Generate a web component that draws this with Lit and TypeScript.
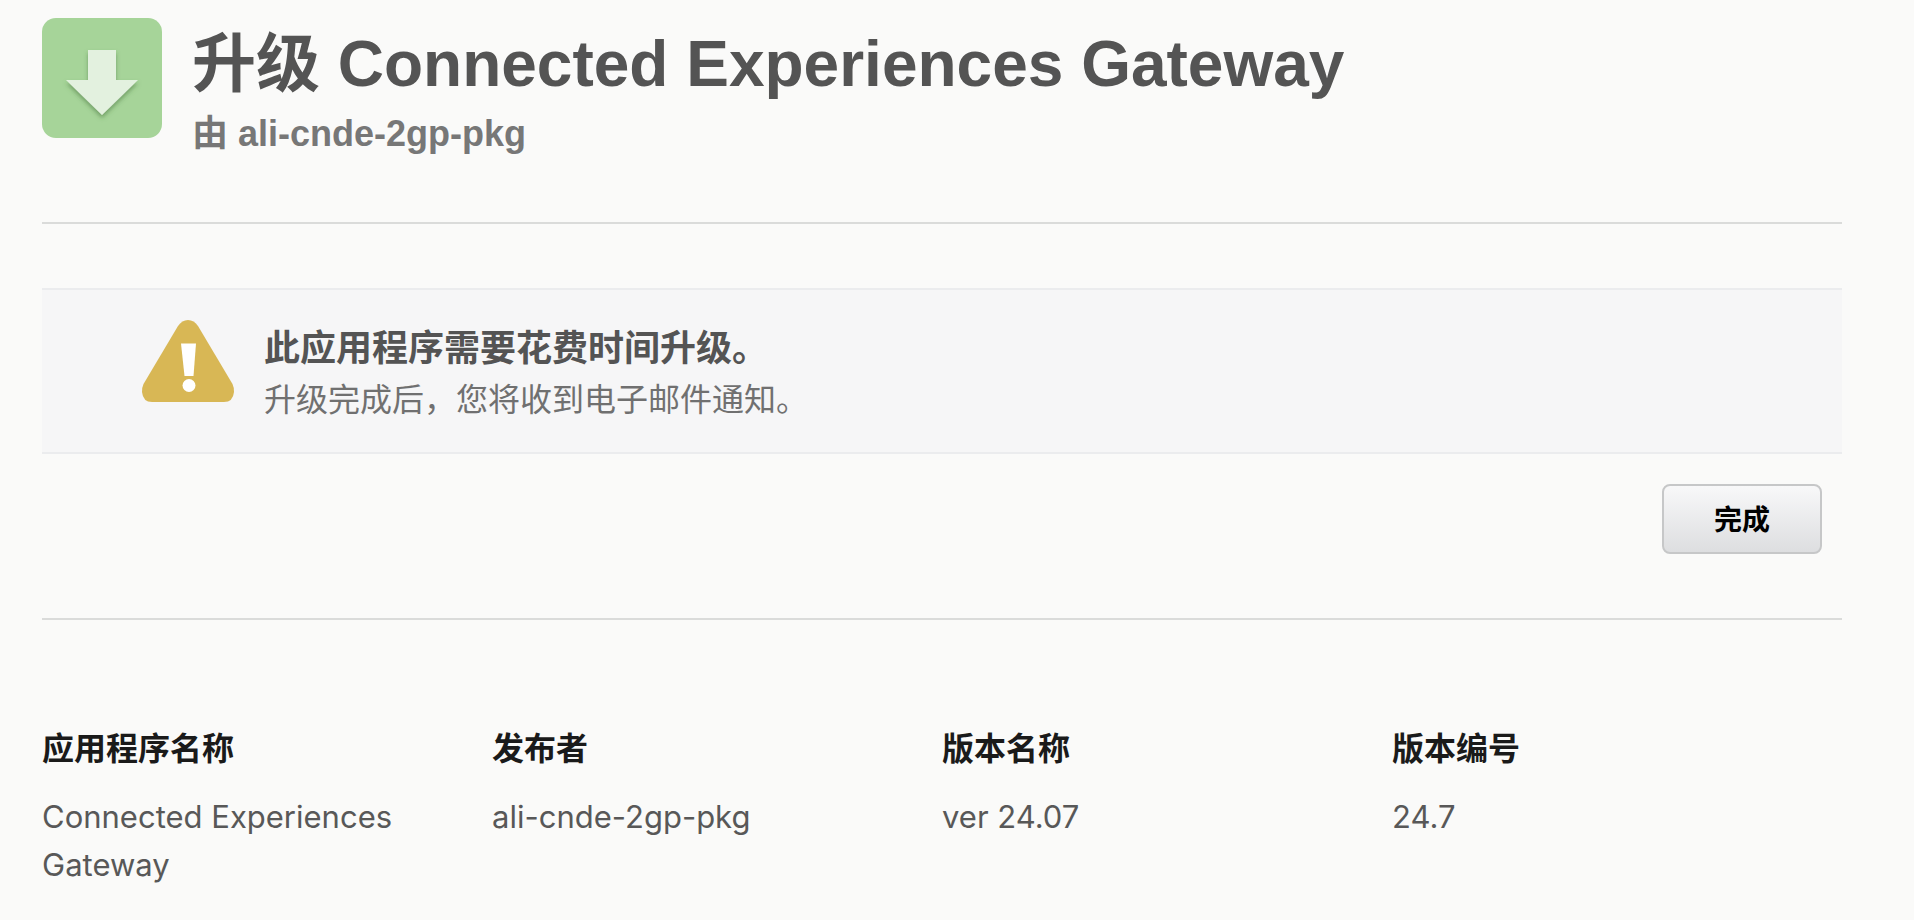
import { LitElement, html, css } from "lit";
import { customElement, state } from "lit/decorators.js";

interface Detail {
  label: string;
  value: string;
}

@customElement("app-root")
export class AppRoot extends LitElement {
  static styles = css`
    :host {
      display: block;
      box-sizing: border-box;
      min-height: 100vh;
      padding: 18px 72px 18px 42px;
      background: #fafaf9;
      color: #545454;
      font-family: "Liberation Sans", "Noto Sans CJK SC", sans-serif;
    }
    h1, h2, p, dl, dt, dd { margin: 0; }
    .header {
      display: flex;
      align-items: flex-start;
      gap: 30px;
      padding-bottom: 56px;
      border-bottom: 2px solid #dadbda;
    }
    .app-icon { flex: none; width: 120px; height: 120px; }
    .title {
      padding-top: 8px;
      font-size: 64px;
      line-height: 76px;
      font-weight: 700;
    }
    .publisher {
      font-size: 36px;
      line-height: 64px;
      font-weight: 700;
      color: #777777;
    }
    .notice {
      display: flex;
      align-items: flex-start;
      gap: 30px;
      margin-top: 64px;
      padding: 30px 100px 28px;
      border: solid #ebecee;
      border-width: 2px 0;
      background: #f6f6f7;
    }
    .warning { flex: none; width: 92px; height: 82px; }
    .notice-body { padding-top: 2px; }
    .notice-title {
      font-size: 36px;
      line-height: 54px;
      font-weight: 700;
    }
    .notice-text {
      font-size: 32px;
      line-height: 48px;
      color: #707070;
    }
    .actions {
      display: flex;
      justify-content: flex-end;
      padding: 30px 20px 64px;
      border-bottom: 2px solid #dadbda;
    }
    .done {
      box-sizing: border-box;
      height: 70px;
      padding: 0 50px 3px;
      border: 2px solid #c6c7c8;
      border-radius: 8px;
      background: linear-gradient(#f8f8f9, #dddee0);
      color: #000000;
      font: inherit;
      font-size: 28px;
      font-weight: 700;
      cursor: pointer;
    }
    .details {
      display: grid;
      grid-template-columns: repeat(4, 1fr);
      padding-top: 105px;
      font-family: Inter, "Noto Sans CJK SC", sans-serif;
      line-height: 48px;
    }
    .detail { padding-right: 50px; }
    .label { color: #1a1a1a; font-size: 32px; font-weight: 700; }
    .value { padding-top: 20px; color: #585858; font-size: 31px; }
  `;

  @state()
  private details: Detail[] = [
    { label: "应用程序名称", value: "Connected Experiences Gateway" },
    { label: "发布者", value: "ali-cnde-2gp-pkg" },
    { label: "版本名称", value: "ver 24.07" },
    { label: "版本编号", value: "24.7" },
  ];

  render() {
    return html`
      <header class="header">
        <svg class="app-icon" viewBox="0 0 120 120" aria-hidden="true">
          <defs>
            <filter id="shadow" x="-20%" y="-20%" width="140%" height="150%">
              <feDropShadow dx="0" dy="3" stdDeviation="2" flood-color="#3c6b30" flood-opacity="0.5" />
            </filter>
          </defs>
          <rect width="120" height="120" rx="14" fill="#a6d499" />
          <path d="M46 32H74V62H96L60 97L24 62H46Z" fill="#e3f1df" filter="url(#shadow)" />
        </svg>
        <div>
          <h1 class="title">升级 Connected Experiences Gateway</h1>
          <p class="publisher">由 ali-cnde-2gp-pkg</p>
        </div>
      </header>
      <section class="notice" role="status">
        <svg class="warning" viewBox="0 0 92 82" aria-hidden="true">
          <path
            d="M36 6Q40 0 46 0Q52 0 56 6L90.500 64Q92 67 92 72Q91 82 82 82H10Q1 82 0 72Q0 67 1.500 64Z"
            fill="#d8b755"
          />
          <path d="M39 23.500H54L51.500 56H42.500Z" fill="#ffffff" />
          <circle cx="47" cy="65.500" r="6.500" fill="#ffffff" />
        </svg>
        <div class="notice-body">
          <h2 class="notice-title">此应用程序需要花费时间升级。</h2>
          <p class="notice-text">升级完成后，您将收到电子邮件通知。</p>
        </div>
      </section>
      <div class="actions">
        <button class="done" type="button">完成</button>
      </div>
      <dl class="details">
        ${this.details.map(
          (item) => html`
            <div class="detail">
              <dt class="label">${item.label}</dt>
              <dd class="value">${item.value}</dd>
            </div>
          `,
        )}
      </dl>
    `;
  }
}
